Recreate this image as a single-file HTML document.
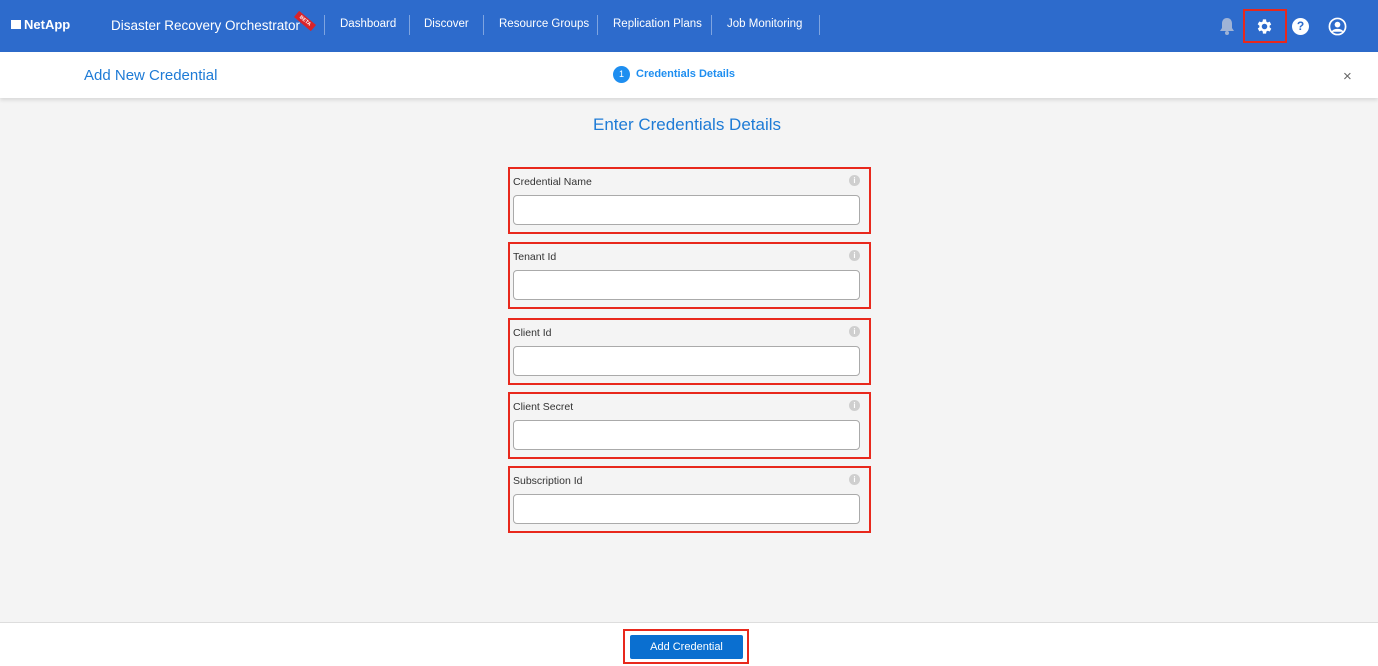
<!DOCTYPE html>
<html><head><meta charset="utf-8"><style>
*{margin:0;padding:0;box-sizing:border-box}
body{width:1378px;height:666px;overflow:hidden;font-family:"Liberation Sans",sans-serif;background:#f4f4f4;position:relative}
.top{position:absolute;left:0;top:0;width:1378px;height:52px;background:#2d6bcc;color:#fff}
.abs{position:absolute;white-space:nowrap}
.sep{position:absolute;top:15px;width:1px;height:20px;background:#7ea4e0}
.nav{font-size:11.5px;top:18px}
.sub{position:absolute;left:0;top:52px;width:1378px;height:46px;background:#fff;box-shadow:0 2px 4px rgba(0,0,0,.12)}
.box{position:absolute;left:508px;width:363px;height:67px;border:2px solid #e8281c}
.box .lab{position:absolute;left:3px;top:7px;font-size:10.5px;color:#333}
.box .inp{position:absolute;left:3px;top:26px;width:347px;height:30px;background:#fff;border:1px solid #aaa;border-radius:4px}
.box .i{position:absolute;right:9px;top:6px;width:11px;height:11px;border-radius:50%;background:#cfcfcf;color:#fff;font-size:8px;text-align:center;line-height:11px;font-weight:bold}
.foot{position:absolute;left:0;top:622px;width:1378px;height:44px;background:#fff;border-top:1px solid #ddd}
</style></head><body>
<div class="top">
 <div class="abs" style="left:11px;top:17px;font-size:13px;font-weight:bold"><span style="display:inline-block;width:10px;height:9px;background:#fff;margin-right:3px;vertical-align:0"></span>NetApp</div>
 <div class="abs" style="left:111px;top:18px;font-size:13.5px">Disaster Recovery Orchestrator</div>
 <div class="abs" style="left:294px;top:17px;width:22px;height:8px;background:#d8232a;transform:rotate(40deg);font-size:5px;text-align:center;line-height:8px;font-weight:bold">BETA</div>
 <div class="sep" style="left:324px"></div><div class="abs nav" style="left:340px">Dashboard</div>
 <div class="sep" style="left:409px"></div><div class="abs nav" style="left:424px">Discover</div>
 <div class="sep" style="left:483px"></div><div class="abs nav" style="left:499px">Resource Groups</div>
 <div class="sep" style="left:597px"></div><div class="abs nav" style="left:613px">Replication Plans</div>
 <div class="sep" style="left:711px"></div><div class="abs nav" style="left:727px">Job Monitoring</div>
 <div class="sep" style="left:819px"></div>
 <svg class="abs" style="left:1219px;top:17px" width="16" height="18" viewBox="0 0 16 18"><path d="M8 1c-3 0-5 2.3-5 5.5V11L1 14h14l-2-3V6.5C13 3.3 11 1 8 1z" fill="#9fb3d6"/><circle cx="8" cy="16" r="2" fill="#9fb3d6"/></svg>
 <div class="abs" style="left:1243px;top:9px;width:44px;height:34px;border:2px solid #e8281c"></div>
 <svg class="abs" style="left:1255px;top:17px" width="19" height="19" viewBox="0 0 24 24"><path fill="#fff" d="M19.4 13a7.5 7.5 0 000-2l2.1-1.6-2-3.5-2.5 1a7.6 7.6 0 00-1.7-1L15 3h-4l-.4 2.7a7.6 7.6 0 00-1.7 1l-2.5-1-2 3.5L6.6 11a7.5 7.5 0 000 2l-2.1 1.6 2 3.5 2.5-1c.5.4 1.1.7 1.7 1L11 21h4l.4-2.7c.6-.3 1.2-.6 1.7-1l2.5 1 2-3.5zM13 15.5a3.5 3.5 0 110-7 3.5 3.5 0 010 7z" transform="translate(-1 0)"/></svg>
 <div class="abs" style="left:1292px;top:18px;width:17px;height:17px;border-radius:50%;background:#fff;color:#2d6bcc;font-weight:bold;font-size:12px;text-align:center;line-height:17px">?</div>
 <svg class="abs" style="left:1328px;top:17px" width="19" height="19" viewBox="0 0 20 20"><circle cx="10" cy="10" r="8.5" fill="none" stroke="#fff" stroke-width="1.8"/><circle cx="10" cy="8" r="3" fill="#fff"/><path d="M4.5 15.5c2-3 9-3 11 0" fill="#fff" stroke="#fff" stroke-width="1.5"/></svg>
</div>
<div class="sub">
 <div class="abs" style="left:84px;top:15px;font-size:15px;color:#1e7bd6">Add New Credential</div>
 <div class="abs" style="left:613px;top:14px;width:17px;height:17px;border-radius:50%;background:#1e8ef0;color:#fff;font-size:9px;text-align:center;line-height:17px">1</div>
 <div class="abs" style="left:636px;top:16px;font-size:11px;font-weight:bold;color:#1e8ef0">Credentials Details</div>
 <div class="abs" style="left:1343px;top:16px;font-size:15px;color:#666">×</div>
</div>
<div class="abs" style="left:0;width:1374px;text-align:center;top:115px;font-size:17px;color:#1e7bd6">Enter Credentials Details</div>
<div class="box" style="top:167px"><div class="lab">Credential Name</div><div class="i">i</div><div class="inp"></div></div>
<div class="box" style="top:242px"><div class="lab">Tenant Id</div><div class="i">i</div><div class="inp"></div></div>
<div class="box" style="top:318px"><div class="lab">Client Id</div><div class="i">i</div><div class="inp"></div></div>
<div class="box" style="top:392px"><div class="lab">Client Secret</div><div class="i">i</div><div class="inp"></div></div>
<div class="box" style="top:466px"><div class="lab">Subscription Id</div><div class="i">i</div><div class="inp"></div></div>
<div class="foot">
 <div class="abs" style="left:623px;top:6px;width:126px;height:35px;border:2px solid #e8281c"></div>
 <div class="abs" style="left:630px;top:12px;width:113px;height:24px;background:#0a6fd0;border-radius:2px;color:#fff;font-size:11px;text-align:center;line-height:24px">Add Credential</div>
</div>
</body></html>
